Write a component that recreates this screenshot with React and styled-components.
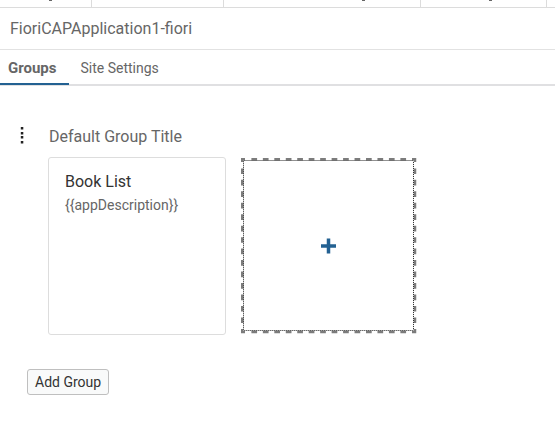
import React from "react";
import styled, { createGlobalStyle } from "styled-components";

const GlobalStyle = createGlobalStyle`
  * { box-sizing: border-box; }
  body {
    margin: 0;
    background: #fff;
    color: #666;
    font-family: Roboto, "Liberation Sans", sans-serif;
  }
  button { font-family: inherit; cursor: pointer; }
`;

const Page = styled.div`
  display: flex;
  flex-direction: column;
`;

const ColumnStrip = styled.div`
  display: grid;
  grid-template-columns: 92fr 132fr 197fr 126fr 8fr;
  height: 8px;
  border-bottom: 1px solid #dcdcdc;
`;

const ColumnEdge = styled.div`
  display: flex;
  padding-left: ${(p) => p.$indent || "0"};
  border-right: ${(p) => (p.$last ? "none" : "1px solid #dcdcdc")};
`;

const Title = styled.h1`
  margin: 0;
  padding: 8px 10px;
  border-bottom: 1px solid #e2e2e2;
  font-size: 16px;
  line-height: 25px;
  font-weight: 400;
`;

const TabBar = styled.nav`
  display: flex;
  height: 36px;
  border-bottom: 2px solid #e0e0e2;
`;

const Tab = styled.button`
  height: 35px;
  margin: 0;
  padding: 2px 12px 0 ${(p) => (p.$selected ? 8 : 12)}px;
  border: 0;
  border-bottom: 2px solid ${(p) => (p.$selected ? "#236192" : "transparent")};
  background: none;
  color: #666;
  font-size: ${(p) => (p.$selected ? 15 : 14)}px;
  font-weight: ${(p) => (p.$selected ? 700 : 400)};
`;

const Content = styled.main`
  display: flex;
  flex-direction: column;
  align-items: flex-start;
  padding: 37px 16px 46px;
`;

const GroupHeader = styled.header`
  display: flex;
  align-items: center;
  gap: 20px;
  height: 26px;
`;

const DragHandle = styled.button`
  display: flex;
  padding: 0 2px;
  border: 0;
  background: none;
`;

const GroupTitle = styled.h2`
  margin: 0;
  font-size: 16px;
  font-weight: 400;
`;

const Tiles = styled.div`
  display: flex;
  flex-wrap: wrap;
  gap: 15px;
  margin: 8px 0 0 32px;
`;

const Tile = styled.article`
  width: 178px;
  height: 178px;
  padding: 14px 16px;
  border: 1px solid #ddd;
  border-radius: 3px;
`;

const TileTitle = styled.h3`
  margin: 0;
  color: #333;
  font-size: 16px;
  line-height: 20px;
  font-weight: 400;
`;

const TileText = styled.p`
  margin: 3px 0 0;
  font-size: 14px;
  line-height: 20px;
`;

const AddTile = styled.button`
  display: flex;
  width: 176px;
  height: 176px;
  margin-top: 1px;
  padding: 0;
  border: 0;
  background: none;
`;

const AddGroup = styled.button`
  height: 26px;
  margin: 34px 0 0 11px;
  padding: 0 7px;
  border: 1px solid #bfbfbf;
  border-radius: 3px;
  background: #f9fafa;
  color: #333;
  font-size: 14px;
`;

function Descender() {
  return (
    <svg width="4" height="1" aria-hidden="true">
      <rect width="3" height="1" fill="#666" />
    </svg>
  );
}

function DotsIcon() {
  return (
    <svg width="9" height="18" viewBox="0 0 9 18" aria-hidden="true" fill="#222">
      {[0, 5, 9, 14].map((y) => (
        <rect key={y} x="2.8" y={y} width="2.5" height="2.5" />
      ))}
    </svg>
  );
}

function AddTileArt() {
  return (
    <svg width="176" height="176" viewBox="0 0 176 176" aria-hidden="true" fill="none">
      <g stroke="#7c7c7c" strokeWidth="2.5">
        <path
          d="M10.4 1.25H166M10.4 174H166M1.25 10.4V166M174 10.4V166"
          strokeDasharray="5.7 5.76"
        />
        <path d="M1.25 4V1.25H4M171 1.25H174V4M174 171V174H171M4 174H1.25V171" />
      </g>
      <rect x="2.5" y="2.5" width="170" height="170" rx="1" stroke="#222" strokeDasharray="1 1" />
      <path d="M80 88H95M87.5 80.5V95.5" stroke="#236192" strokeWidth="3.5" />
    </svg>
  );
}

export default function App() {
  return (
    <Page>
      <GlobalStyle />
      <ColumnStrip aria-hidden="true">
        <ColumnEdge $indent="53%"><Descender /></ColumnEdge>
        <ColumnEdge />
        <ColumnEdge $indent="70%"><Descender /></ColumnEdge>
        <ColumnEdge $indent="54%"><Descender /></ColumnEdge>
        <ColumnEdge $last />
      </ColumnStrip>
      <Title>FioriCAPApplication1-fiori</Title>
      <TabBar>
        <Tab type="button" $selected aria-current="page">Groups</Tab>
        <Tab type="button">Site Settings</Tab>
      </TabBar>
      <Content>
        <GroupHeader>
          <DragHandle type="button" aria-label="Group actions"><DotsIcon /></DragHandle>
          <GroupTitle>Default Group Title</GroupTitle>
        </GroupHeader>
        <Tiles>
          <Tile>
            <TileTitle>Book List</TileTitle>
            <TileText>{"{{appDescription}}"}</TileText>
          </Tile>
          <AddTile type="button" aria-label="Add tile"><AddTileArt /></AddTile>
        </Tiles>
        <AddGroup type="button">Add Group</AddGroup>
      </Content>
    </Page>
  );
}
